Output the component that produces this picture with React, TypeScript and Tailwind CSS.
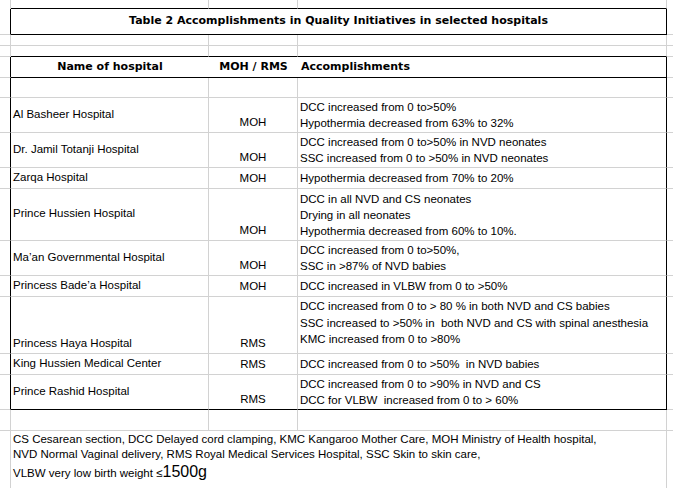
import React from 'react';

const body = "font-['Liberation_Sans',Arial,sans-serif] text-[11.5px] text-black";
const bold = "font-['DejaVu_Sans',Verdana,sans-serif] font-bold text-[11px] text-black";

interface HospitalRow {
  name: string;
  type: string;
  lines: string[];
  h: string;
  nameAlign?: string;
  textAlign?: string;
}

const rows: HospitalRow[] = [
  {
    name: 'Al Basheer Hospital',
    type: 'MOH',
    lines: ['DCC increased from 0 to>50%', 'Hypothermia decreased from 63% to 32%'],
    h: 'h-[35px]',
  },
  {
    name: 'Dr. Jamil Totanji Hospital',
    type: 'MOH',
    lines: ['DCC increased from 0 to>50% in NVD neonates', 'SSC increased from 0 to >50% in NVD neonates'],
    h: 'h-[35px]',
  },
  {
    name: 'Zarqa Hospital',
    type: 'MOH',
    lines: ['Hypothermia decreased from 70% to 20%'],
    h: 'h-[21px]',
  },
  {
    name: 'Prince Hussien Hospital',
    type: 'MOH',
    lines: ['DCC in all NVD and CS neonates', 'Drying in all neonates', 'Hypothermia decreased from 60% to 10%.'],
    h: 'h-[52px]',
  },
  {
    name: 'Ma’an Governmental Hospital',
    type: 'MOH',
    lines: ['DCC increased from 0 to>50%,', 'SSC in >87% of NVD babies'],
    h: 'h-[35px]',
  },
  {
    name: 'Princess Bade’a Hospital',
    type: 'MOH',
    lines: ['DCC increased in VLBW from 0 to >50%'],
    h: 'h-[21px]',
  },
  {
    name: 'Princess Haya Hospital',
    type: 'RMS',
    lines: [
      'DCC increased from 0 to > 80 % in both NVD and CS babies',
      'SSC increased to >50% in  both NVD and CS with spinal anesthesia',
      'KMC increased from 0 to >80%',
    ],
    h: 'h-[57px]',
    nameAlign: 'items-end',
    textAlign: 'justify-start pt-[1px] leading-[16.5px]',
  },
  {
    name: 'King Hussien Medical Center',
    type: 'RMS',
    lines: ['DCC increased from 0 to >50%  in NVD babies'],
    h: 'h-[21px]',
  },
  {
    name: 'Prince Rashid Hospital',
    type: 'RMS',
    lines: ['DCC increased from 0 to >90% in NVD and CS', 'DCC for VLBW  increased from 0 to > 60%'],
    h: 'h-[35px]',
  },
];

// plain grid row, gray lines everywhere
function GridRow({ h }: { h: string }) {
  return (
    <div className={`flex ${h}`}>
      <div className="w-[11px] shrink-0 border-r border-b border-[#d2d2d2]" />
      <div className="w-[198px] shrink-0 border-r border-b border-[#d2d2d2]" />
      <div className="w-[89px] shrink-0 border-r border-b border-[#d2d2d2]" />
      <div className="w-[369px] shrink-0 border-r border-b border-[#d2d2d2]" />
      <div className="flex-1 border-b border-[#d2d2d2]" />
    </div>
  );
}

export default function App() {
  return (
    <div className={`w-[673px] h-[488px] overflow-hidden bg-white ${body}`}>
      {/* row above title, bottom line is title top */}
      <div className="flex h-[9px]">
        <div className="w-[11px] shrink-0 border-r border-[#d2d2d2]" />
        <div className="w-[198px] shrink-0 border-r border-b border-r-[#d2d2d2] border-b-black" />
        <div className="w-[89px] shrink-0 border-r border-b border-r-[#d2d2d2] border-b-black" />
        <div className="w-[369px] shrink-0 border-r border-b border-r-[#d2d2d2] border-b-black" />
        <div className="flex-1" />
      </div>

      {/* title */}
      <div className="flex h-[26px]">
        <div className="w-[11px] shrink-0 border-r border-b border-r-black border-b-[#d2d2d2]" />
        <div className={`w-[656px] shrink-0 border-r border-b border-black flex items-center justify-center ${bold}`}>
          Table 2 Accomplishments in Quality Initiatives in selected hospitals
        </div>
        <div className="flex-1 border-b border-[#d2d2d2]" />
      </div>

      <GridRow h="h-[11px]" />

      <div className="flex h-[11px]">
        <div className="w-[11px] shrink-0 border-r border-b border-[#d2d2d2]" />
        <div className="w-[198px] shrink-0 border-r border-b border-r-[#d2d2d2] border-b-black" />
        <div className="w-[89px] shrink-0 border-r border-b border-r-[#d2d2d2] border-b-black" />
        <div className="w-[369px] shrink-0 border-r border-b border-r-[#d2d2d2] border-b-black" />
        <div className="flex-1 border-b border-[#d2d2d2]" />
      </div>

      {/* header */}
      <div className="flex h-[21px]">
        <div className="w-[11px] shrink-0 border-r border-b border-r-black border-b-[#d2d2d2]" />
        <div className={`w-[198px] shrink-0 border-b border-black flex items-center justify-center ${bold}`}>
          Name of hospital
        </div>
        <div className={`w-[89px] shrink-0 border-b border-black flex items-center justify-center ${bold}`}>
          MOH / RMS
        </div>
        <div className={`w-[369px] shrink-0 border-r border-b border-black flex items-center pl-[3px] ${bold}`}>
          Accomplishments
        </div>
        <div className="flex-1 border-b border-[#d2d2d2]" />
      </div>

      {/* blank row inside table */}
      <div className="flex h-[20px]">
        <div className="w-[11px] shrink-0 border-r border-b border-r-black border-b-[#d2d2d2]" />
        <div className="w-[198px] shrink-0 border-r border-b border-[#d2d2d2]" />
        <div className="w-[89px] shrink-0 border-r border-b border-[#d2d2d2]" />
        <div className="w-[369px] shrink-0 border-r border-b border-r-black border-b-[#d2d2d2]" />
        <div className="flex-1 border-b border-[#d2d2d2]" />
      </div>

      {rows.map((r, i) => {
        const last = i === rows.length - 1;
        const bottom = last ? 'border-b-black' : 'border-b-[#d2d2d2]';
        return (
          <div key={r.name} className={`flex ${r.h}`}>
            <div className="w-[11px] shrink-0 border-r border-b border-r-black border-b-[#d2d2d2]" />
            <div
              className={`w-[198px] shrink-0 border-r border-b border-r-[#d2d2d2] ${bottom} flex ${r.nameAlign ?? 'items-center'} pl-[2px] pb-[1px] whitespace-nowrap`}
            >
              {r.name}
            </div>
            <div className={`w-[89px] shrink-0 border-r border-b border-r-[#d2d2d2] ${bottom} flex items-end justify-center pb-[1px]`}>
              {r.type}
            </div>
            <div
              className={`w-[369px] shrink-0 border-r border-b border-r-black ${bottom} flex flex-col ${r.textAlign ?? 'justify-center leading-[16px]'} pl-[2px] whitespace-pre`}
            >
              {r.lines.map((l) => (
                <div key={l}>{l}</div>
              ))}
            </div>
            <div className="flex-1 border-b border-[#d2d2d2]" />
          </div>
        );
      })}

      <GridRow h="h-[21px]" />

      {/* footnote */}
      <div className="flex h-[70px]">
        <div className="w-[11px] shrink-0 border-r border-[#d2d2d2]" />
        <div className="w-[656px] shrink-0 border-r border-[#d2d2d2] pl-[2px] pt-[1px] leading-[15px] whitespace-nowrap">
          <div>CS Cesarean section, DCC Delayed cord clamping, KMC Kangaroo Mother Care, MOH Ministry of Health hospital,</div>
          <div>NVD Normal Vaginal delivery, RMS Royal Medical Services Hospital, SSC Skin to skin care,</div>
          <div className="leading-[20px]">
            VLBW very low birth weight ≤<span className="text-[16px]">1500g</span>
          </div>
        </div>
        <div className="flex-1" />
      </div>
    </div>
  );
}
